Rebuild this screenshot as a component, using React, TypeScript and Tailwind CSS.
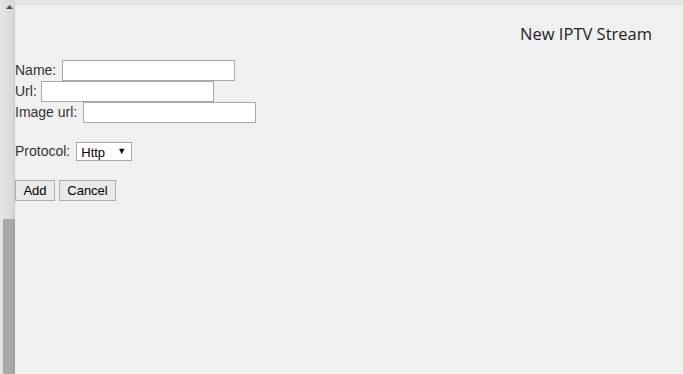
import { ChangeEvent, useState } from 'react';

export default function App() {
  const [name, setName] = useState('');
  const [url, setUrl] = useState('');
  const [imageUrl, setImageUrl] = useState('');
  const [protocol, setProtocol] = useState('Http');

  const inputCls =
    'h-[21px] w-[173px] bg-white border border-[#a9a9a9] px-[2px] text-[13px] outline-none';

  return (
    <div className="flex h-[374px] w-[683px] overflow-hidden bg-[#e8e8e8]">
      {/* scrollbar strip */}
      <div className="flex w-[15px] flex-col bg-gradient-to-r from-[#e4e4e4] to-[#d9d9d9]">
        <div className="flex h-[14px] items-center justify-center pl-[3px]">
          <svg width="7" height="4" viewBox="0 0 7 4">
            <path d="M3.5 0L7 4H0z" fill="#505050" />
          </svg>
        </div>
        <div className="flex-1" />
        <div className="ml-[3px] h-[155px] bg-[#a8a8a8]" />
      </div>

      <div className="flex flex-1 flex-col">
        <div className="h-[5px] bg-[#e6e6e6]" />
        <div className="flex-1 bg-[#f0f0f0] shadow-[-1px_0_2px_rgba(0,0,0,0.08)]">
          <div className="flex justify-end pr-[31px] pt-[18px]">
            <h1 className="text-[16.5px] leading-[22px] text-[#222] font-['Open_Sans',sans-serif]">
              New IPTV Stream
            </h1>
          </div>

          <form
            className="mt-[15px] flex flex-col text-[14px] text-[#333] font-['Liberation_Sans',Arial,sans-serif]"
            onSubmit={e => e.preventDefault()}
          >
            <label className="flex h-[21px] items-center gap-[6px]">
              Name:
              <input
                className={inputCls}
                value={name}
                onChange={(e: ChangeEvent<HTMLInputElement>) => setName(e.target.value)}
              />
            </label>
            <label className="flex h-[21px] items-center gap-[4px]">
              Url:
              <input
                className={inputCls}
                value={url}
                onChange={(e: ChangeEvent<HTMLInputElement>) => setUrl(e.target.value)}
              />
            </label>
            <label className="flex h-[21px] items-center gap-[6px]">
              Image url:
              <input
                className={inputCls}
                value={imageUrl}
                onChange={(e: ChangeEvent<HTMLInputElement>) => setImageUrl(e.target.value)}
              />
            </label>

            <label className="mt-[19px] flex h-[19px] items-center gap-[6px]">
              Protocol:
              <span className="relative inline-flex h-[19px] w-[56px] items-center border border-[#a9a9a9] bg-white">
                <select
                  className="h-full w-full appearance-none bg-transparent pl-[4px] text-[13px] text-black outline-none"
                  value={protocol}
                  onChange={e => setProtocol(e.target.value)}
                >
                  <option>Http</option>
                  <option>Udp</option>
                  <option>Rtp</option>
                </select>
                <span className="pointer-events-none absolute right-[5px] text-[9px] text-black">▼</span>
              </span>
            </label>

            <div className="mt-[19px] flex gap-[4px]">
              <button
                type="submit"
                className="h-[21px] w-[40px] border border-[#adadad] bg-[#e9e9e9] text-[13px] text-black"
              >
                Add
              </button>
              <button
                type="button"
                className="h-[21px] w-[57px] border border-[#adadad] bg-[#e9e9e9] text-[13px] text-black"
              >
                Cancel
              </button>
            </div>
          </form>
        </div>
      </div>
    </div>
  );
}
